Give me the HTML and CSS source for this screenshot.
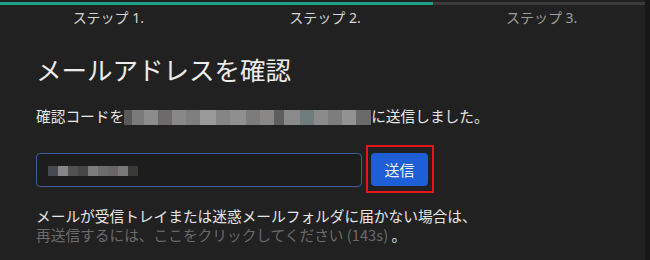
FILE: index.html
```html
<!DOCTYPE html>
<html lang="ja">
<head>
<meta charset="utf-8">
<title>メールアドレスを確認</title>
<link rel="stylesheet" href="styles.css">
</head>
<body>
<div class="page">
  <div class="stepper">
    <div class="step done">ステップ 1.</div>
    <div class="step done">ステップ 2.</div>
    <div class="step todo">ステップ 3.</div>
  </div>
  <main class="content">
    <h1 class="title">メールアドレスを確認</h1>
    <p class="lead">確認コードを<span class="blur-mail"></span>に送信しました。</p>
    <form class="code-form">
      <div class="code-input"><span class="blur-code"></span></div>
      <button type="button" class="send-btn">送信</button>
    </form>
    <p class="note">メールが受信トレイまたは迷惑メールフォルダに届かない場合は、<br><span class="resend">再送信するには、ここをクリックしてください (143s)</span> 。</p>
  </main>
</div>
</body>
</html>
```
FILE: styles.css
```css
html, body {
  margin: 0;
  padding: 0;
  background: #212121;
}
body {
  font-family: "Noto Sans", "Noto Sans CJK JP", sans-serif;
  color: #e8e8e8;
}
.page {
  position: relative;
  width: 650px;
  height: 260px;
  overflow: hidden;
}
.page::after {
  content: "";
  position: absolute;
  top: 0;
  right: 0;
  width: 5px;
  height: 100%;
  background: #171717;
}
.stepper {
  display: grid;
  grid-template-columns: 1fr 1fr 1fr;
  margin-top: 2px;
}
.step {
  border-top: 3px solid #3a3a3a;
  padding-top: 3px;
  text-align: center;
  font-size: 14px;
  line-height: 20px;
  color: #d6d6d6;
}
.step.done {
  border-top-color: #1f9f87;
}
.step.todo {
  color: #9e9e9e;
}
.content {
  padding-left: 36px;
}
.title {
  margin: 24px 0 0;
  font-family: "Noto Sans CJK JP", sans-serif;
  font-weight: 400;
  font-size: 25.5px;
  line-height: 34px;
  color: #ececec;
}
.lead {
  margin: 19px 0 0;
  font-family: "Noto Sans CJK JP", sans-serif;
  font-size: 14.7px;
  line-height: 22px;
  display: flex;
  align-items: center;
}
.blur-mail {
  display: inline-block;
  width: 247px;
  height: 15px;
  margin-top: 2px;
  background: linear-gradient(90deg,
    #5a5a5a 0 8px, #7a7a7a 8px 20px, #8c8c8c 20px 34px, #6e6a6c 34px 48px,
    #888888 48px 62px, #7e7e7e 62px 76px, #9a9a98 76px 92px, #858585 92px 106px,
    #8f8f8f 106px 122px, #7c7c7c 122px 136px, #8a8886 136px 150px, #5e5e5e 150px 160px,
    #8a8a8a 160px 176px, #6f7c7e 176px 190px, #8b8b8b 190px 204px, #7d7d7d 204px 218px,
    #929292 218px 232px, #6a6a6a 232px 247px);
}
.code-form {
  display: flex;
  gap: 9px;
  margin-top: 26px;
}
.code-input {
  box-sizing: border-box;
  width: 326px;
  height: 34px;
  border: 1px solid #3d5d9f;
  border-radius: 4px;
  background: #1d1d1d;
  display: flex;
  align-items: center;
  padding-left: 11px;
}
.blur-code {
  display: block;
  width: 90px;
  height: 10px;
  margin-top: 2px;
  background: linear-gradient(90deg,
    #464b52 0 10px, #868686 10px 20px, #525252 20px 30px, #474747 30px 40px,
    #7c7c7a 40px 50px, #6c6c6c 50px 60px, #6b6666 60px 70px, #787878 70px 80px,
    #3a3a36 80px 90px);
}
.send-btn {
  position: relative;
  width: 57px;
  height: 33px;
  border: none;
  border-radius: 4px;
  background: #1e5fd8;
  color: #f2f2f2;
  font-family: "Noto Sans CJK JP", sans-serif;
  font-size: 15px;
  padding: 0;
  cursor: pointer;
}
.send-btn::after {
  content: "";
  position: absolute;
  left: -5px;
  right: -6px;
  top: -8px;
  bottom: -7px;
  border: 2px solid #e8141c;
}
.note {
  margin: 19px 0 0;
  font-family: "Noto Sans CJK JP", sans-serif;
  font-size: 14.7px;
  line-height: 19px;
  color: #e6e6e6;
}
.resend {
  color: #6a6a6a;
}
```
